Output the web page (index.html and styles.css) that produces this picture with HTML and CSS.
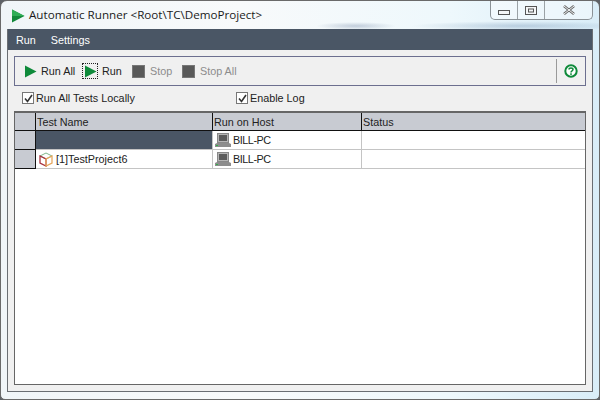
FILE: index.html
```html
<!DOCTYPE html>
<html>
<head>
<meta charset="utf-8">
<title>Automatic Runner</title>
<link rel="stylesheet" href="styles.css">
</head>
<body>
<div class="window">
  <div class="titlebar">
    <svg class="title-icon" width="14" height="14" viewBox="0 0 14 14"><path d="M1 0.5L13.5 7L1 13.5Z" fill="#12893a"/><path d="M1 0.5L13.5 7L1 7Z" fill="#2fae55"/></svg>
    <span class="title-text">Automatic Runner &lt;Root\TC\DemoProject&gt;</span>
    <div class="caption-buttons">
      <div class="cap cap-min"><svg width="12" height="5" viewBox="0 0 12 5"><rect x="0.5" y="0.5" width="11" height="4" fill="#f4f6f7" stroke="#555"/></svg></div>
      <div class="cap cap-max"><svg width="12" height="9" viewBox="0 0 12 9"><rect x="0.5" y="0.5" width="11" height="8" fill="#f4f6f7" stroke="#555"/><rect x="3.5" y="3" width="5" height="3" fill="none" stroke="#555"/></svg></div>
      <div class="cap cap-close"><svg width="12" height="10" viewBox="0 0 12 10"><path d="M1 1L11 9M11 1L1 9" stroke="#666" stroke-width="2.6"/><path d="M1 1L11 9M11 1L1 9" stroke="#f2f4f5" stroke-width="1"/></svg></div>
    </div>
  </div>
  <div class="client">
    <div class="menubar"><span class="menu-item">Run</span><span class="menu-item">Settings</span></div>
    <div class="body">
      <div class="toolbar">
        <div class="tool tool-runall">
          <svg width="13" height="13" viewBox="0 0 13 13"><path d="M1 0.5L12.5 6.5L1 12.5Z" fill="#0f8a3a"/></svg>
          <span>Run All</span>
        </div>
        <div class="tool tool-run">
          <span class="focus"><svg width="13" height="13" viewBox="0 0 13 13"><path d="M1 0.5L12.5 6.5L1 12.5Z" fill="#0f8a3a"/></svg></span>
          <span>Run</span>
        </div>
        <div class="tool tool-stop disabled"><span class="stop-icon"></span><span>Stop</span></div>
        <div class="tool tool-stopall disabled"><span class="stop-icon"></span><span>Stop All</span></div>
        <div class="toolbar-end">
          <svg width="14" height="14" viewBox="0 0 14 14"><circle cx="7" cy="7" r="5.7" fill="#fff" stroke="#0f8a3a" stroke-width="2"/><path d="M5 5.6C5 3.6 9 3.6 9 5.6C9 7 7 6.8 7 8.4" fill="none" stroke="#0f8a3a" stroke-width="1.5"/><rect x="6.2" y="9.3" width="1.6" height="1.6" fill="#0f8a3a"/></svg>
        </div>
      </div>
      <div class="options">
        <label class="check check-first"><span class="box"><svg width="9" height="9" viewBox="0 0 9 9"><path d="M1 4.5L3.5 7.5L8 1" fill="none" stroke="#333" stroke-width="1.6"/></svg></span>Run All Tests Locally</label>
        <label class="check"><span class="box"><svg width="9" height="9" viewBox="0 0 9 9"><path d="M1 4.5L3.5 7.5L8 1" fill="none" stroke="#333" stroke-width="1.6"/></svg></span>Enable Log</label>
      </div>
      <div class="grid">
        <div class="row head">
          <div class="cell rh"></div>
          <div class="cell c1">Test Name</div>
          <div class="cell c2">Run on Host</div>
          <div class="cell c3">Status</div>
        </div>
        <div class="row">
          <div class="cell rh"></div>
          <div class="cell c1 selected"></div>
          <div class="cell c2"><svg class="pc" width="16" height="14" viewBox="0 0 16 14"><rect x="2.5" y="0.5" width="11" height="9" fill="#b5b5b5" stroke="#888"/><rect x="4" y="2" width="8" height="6" fill="#5c5c5c"/><path d="M2 10H14L16 11V14H0V11Z" fill="#8d8d8d"/><rect x="1" y="12" width="2" height="1" fill="#2fb34a"/></svg><span class="host">BILL-PC</span></div>
          <div class="cell c3"></div>
        </div>
        <div class="row">
          <div class="cell rh"></div>
          <div class="cell c1"><svg class="cube" width="14" height="15" viewBox="0 0 14 15"><path d="M7 1L13 4V11L7 14L1 11V4Z" fill="#fff"/><path d="M1 4L7 1L13 4L7 7Z" fill="none" stroke="#7fb88c"/><path d="M1 4V11L7 14V7Z" fill="none" stroke="#a8323f" stroke-width="1.3"/><path d="M13 4V11L7 14V7Z" fill="none" stroke="#e6a860" stroke-width="1.3"/></svg>[1]TestProject6</div>
          <div class="cell c2"><svg class="pc" width="16" height="14" viewBox="0 0 16 14"><rect x="2.5" y="0.5" width="11" height="9" fill="#b5b5b5" stroke="#888"/><rect x="4" y="2" width="8" height="6" fill="#5c5c5c"/><path d="M2 10H14L16 11V14H0V11Z" fill="#8d8d8d"/><rect x="1" y="12" width="2" height="1" fill="#2fb34a"/></svg><span class="host">BILL-PC</span></div>
          <div class="cell c3"></div>
        </div>
      </div>
    </div>
  </div>
</div>
</body>
</html>
```
FILE: styles.css
```css
* { box-sizing: border-box; }
html, body { margin: 0; padding: 0; width: 600px; height: 400px; overflow: hidden; background: #5d6166; }
body { font-family: "Liberation Sans", Arial, sans-serif; font-size: 10.8px; color: #222; }
.window {
  width: 600px; height: 400px;
  border: 1px solid #6a6a6a; border-radius: 7px 7px 5px 5px;
  background:
    radial-gradient(ellipse 110px 5px at 520px 25px, rgba(130,160,190,.45), transparent),
    radial-gradient(ellipse 40px 4px at 355px 25px, rgba(120,140,170,.4), transparent),
    linear-gradient(90deg, #f0f5f8 0%, #f8fafb 40%, #eef8fc 75%, #d9edf8 100%);
  padding: 0 6px 7px 6px;
  display: flex; flex-direction: column;
}
.titlebar { height: 28px; flex: none; display: flex; align-items: flex-start; }
.title-icon { margin: 8px 0 0 4px; flex: none; }
.title-text { margin: 6px 0 0 4px; font-family: "Open Sans", "Noto Sans", sans-serif; font-size: 11.65px; line-height: 16px; color: #1a1a1a; white-space: nowrap; }
.caption-buttons {
  margin-left: auto; margin-top: 0; width: 103px; height: 19px; flex: none; display: flex;
  border: 1px solid #8b9297; border-top: 0; border-radius: 0 0 5px 5px; background: rgba(255,255,255,.45);
}
.cap { display: flex; align-items: center; justify-content: center; border-right: 1px solid #9ba2a6; }
.cap-min { width: 27px; padding-top: 5px; }
.cap-max { width: 27px; padding-top: 1px; }
.cap-close { flex: 1; border-right: 0; }
.client { flex: 1; display: flex; flex-direction: column; border: 1px solid #6a6e73; border-top: 0; min-height: 0; }
.menubar { height: 21px; flex: none; background: #4a5665; color: #fff; display: flex; align-items: center; padding-left: 8px; gap: 15px; }
.menu-item { line-height: 21px; padding-top: 1px; }
.body { flex: 1; background: #f0f0f0; padding: 6px; display: flex; flex-direction: column; min-height: 0; }
.toolbar { height: 30px; flex: none; border: 1px solid #6c6f8f; display: flex; align-items: center; padding-left: 9px; }
.tool { display: flex; align-items: center; }
.tool-runall { gap: 4px; width: 58px; }
.tool-run { gap: 4px; width: 50px; }
.tool-stop { gap: 5px; width: 50px; }
.tool-stopall { gap: 5px; }
.focus { display: flex; width: 16px; height: 16px; border: 1px dotted #222; align-items: center; justify-content: center; }
.stop-icon { width: 13px; height: 13px; background: #595959; border: 1px solid #777; display: block; }
.disabled { color: #8c8c8c; }
.toolbar-end { margin-left: auto; width: 29px; height: 24px; border-left: 1px solid #9a9a9a; display: flex; align-items: center; justify-content: center; }
.options { height: 25px; flex: none; display: flex; align-items: center; padding: 0 0 1px 8px; }
.check { display: flex; align-items: center; gap: 1px; }
.check-first { width: 214px; }
.box { width: 12px; height: 12px; border: 1px solid #777; background: #fff; display: flex; align-items: center; justify-content: center; flex: none; margin-right: 1px; }
.grid { flex: 1; min-height: 0; background: #fff; border: 1px solid #666; border-top: 2px solid #666; }
.row { display: flex; height: 19px; }
.row.head { height: 18px; background: #c8cbd2; }
.cell { display: flex; align-items: center; padding-left: 1px; border-right: 1px solid #c4c4c4; border-bottom: 1px solid #c4c4c4; white-space: nowrap; min-width: 0; }
.rh { width: 21px; background: #c8cbd2; border-right: 1px solid #111; border-bottom: 1px solid #111; flex: none; }
.c1 { width: 177px; flex: none; }
.c2 { width: 149px; flex: none; }
.c3 { flex: 1; border-right: 0; }
.head .cell { border-color: #111; background: #c8cbd2; }
.selected { background: #4a5665; }
.pc { margin: 0 2px 0 1px; flex: none; }
.host { letter-spacing: -0.45px; }
.cube { margin: 0 3px 0 2px; flex: none; }
```
